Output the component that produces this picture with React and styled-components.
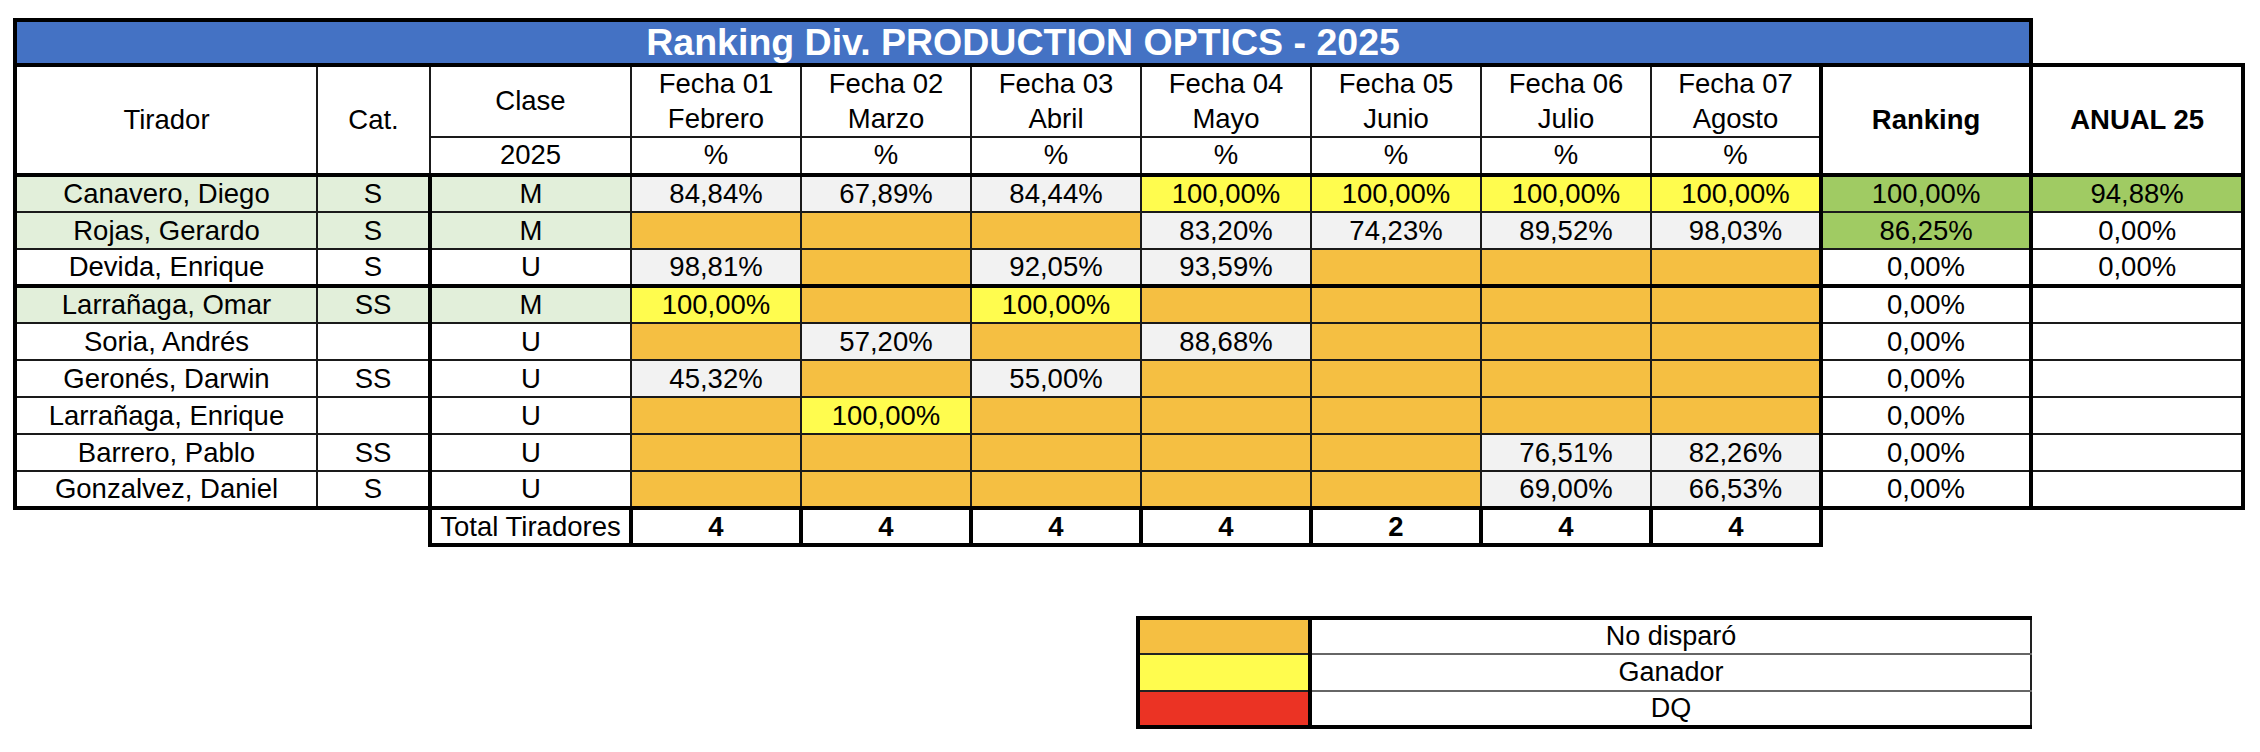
import styled, { createGlobalStyle } from 'styled-components'

const GlobalStyle = createGlobalStyle`
  html, body {
    margin: 0;
    padding: 0;
    background: #fff;
  }
  body {
    font-family: "Liberation Sans", Arial, sans-serif;
    color: #000;
  }
`

const THIN = '2px solid #1a1a1a'
const THICK = '4px solid #000'

const fills = {
  white: '#ffffff',
  mint: '#e2efda',
  gray: '#f2f2f2',
  orange: '#f5bf42',
  yellow: '#fffc4e',
  green: '#a0cb63',
  red: '#eb3324',
  blue: '#4472c4',
}

// layout
const Page = styled.div`
  display: flex;
  flex-direction: column;
  align-items: flex-start;
  gap: 69px;
  padding: 18px 0 0 13px;
`

// tabla principal
const Sheet = styled.table`
  border-collapse: collapse;
  table-layout: fixed;
  width: 2228px;
  font-size: 27.5px;
`

const Row = styled.tr`
  height: ${({ $h }) => $h || 37}px;
`

const Cell = styled.td`
  padding: 0;
  text-align: center;
  vertical-align: middle;
  white-space: nowrap;
  overflow: hidden;
  line-height: 1.15;
  font-weight: ${({ $bold }) => ($bold ? 700 : 400)};
  background: ${({ $bg }) => fills[$bg || 'white']};
  border-left: ${({ $l }) => ($l ? THICK : THIN)};
  border-right: ${({ $r }) => ($r ? THICK : THIN)};
  border-top: ${({ $t }) => ($t ? THICK : THIN)};
  border-bottom: ${({ $b }) => ($b ? THICK : THIN)};
`

const HeadCell = styled(Cell)`
  line-height: 1.26;
`

const Blank = styled.td`
  padding: 0;
  border: none;
  background: transparent;
`

const Title = styled(Cell)`
  color: #fff;
  font-size: 37.5px;
  font-weight: 700;
  line-height: 1;
`

// leyenda
const Legend = styled.table`
  border-collapse: collapse;
  table-layout: fixed;
  width: 893px;
  margin-left: 1123px;
  font-size: 27px;
`

const LegendRow = styled.tr`
  height: 36.5px;
`

const Swatch = styled.td`
  padding: 0;
  background: ${({ $bg }) => fills[$bg]};
  border-left: ${THICK};
  border-right: ${THICK};
  border-top: ${({ $first }) => ($first ? THICK : '2px solid #222')};
  border-bottom: ${({ $last }) => ($last ? THICK : '2px solid #222')};
`

const LegendText = styled.td`
  padding: 0;
  text-align: center;
  vertical-align: middle;
  line-height: 1.1;
  border-right: 2px solid #222;
  border-top: ${({ $first }) => ($first ? THICK : '2px solid #666')};
  border-bottom: ${({ $last }) => ($last ? THICK : '2px solid #666')};
`

const months = ['Febrero', 'Marzo', 'Abril', 'Mayo', 'Junio', 'Julio', 'Agosto']
const totals = [4, 4, 4, 4, 2, 4, 4]

// '' = no disparó, '*' = ganador
const shooters = [
  { name: 'Canavero, Diego', cat: 'S', clase: 'M', mint: true, dates: ['84,84%', '67,89%', '84,44%', '*100,00%', '*100,00%', '*100,00%', '*100,00%'], rank: '100,00%', rankHi: true, anual: '94,88%', anualHi: true },
  { name: 'Rojas, Gerardo', cat: 'S', clase: 'M', mint: true, dates: ['', '', '', '83,20%', '74,23%', '89,52%', '98,03%'], rank: '86,25%', rankHi: true, anual: '0,00%' },
  { name: 'Devida, Enrique', cat: 'S', clase: 'U', dates: ['98,81%', '', '92,05%', '93,59%', '', '', ''], rank: '0,00%', anual: '0,00%', sep: true },
  { name: 'Larrañaga, Omar', cat: 'SS', clase: 'M', mint: true, dates: ['*100,00%', '', '*100,00%', '', '', '', ''], rank: '0,00%', anual: '' },
  { name: 'Soria, Andrés', cat: '', clase: 'U', dates: ['', '57,20%', '', '88,68%', '', '', ''], rank: '0,00%', anual: '' },
  { name: 'Geronés, Darwin', cat: 'SS', clase: 'U', dates: ['45,32%', '', '55,00%', '', '', '', ''], rank: '0,00%', anual: '' },
  { name: 'Larrañaga, Enrique', cat: '', clase: 'U', dates: ['', '*100,00%', '', '', '', '', ''], rank: '0,00%', anual: '' },
  { name: 'Barrero, Pablo', cat: 'SS', clase: 'U', dates: ['', '', '', '', '', '76,51%', '82,26%'], rank: '0,00%', anual: '' },
  { name: 'Gonzalvez, Daniel', cat: 'S', clase: 'U', dates: ['', '', '', '', '', '69,00%', '66,53%'], rank: '0,00%', anual: '', sep: true },
]

const legend = [
  { bg: 'orange', label: 'No disparó' },
  { bg: 'yellow', label: 'Ganador' },
  { bg: 'red', label: 'DQ' },
]

function dateCell(v, i, sep) {
  if (v === '') return <Cell key={i} $bg="orange" $b={sep} />
  if (v.startsWith('*')) return <Cell key={i} $bg="yellow" $b={sep}>{v.slice(1)}</Cell>
  return <Cell key={i} $bg="gray" $b={sep}>{v}</Cell>
}

export default function App() {
  return (
    <>
      <GlobalStyle />
      <Page>
        <Sheet>
          <colgroup>
            <col style={{ width: 302 }} />
            <col style={{ width: 113 }} />
            <col style={{ width: 201 }} />
            {months.map((m) => <col key={m} style={{ width: 170 }} />)}
            <col style={{ width: 210 }} />
            <col style={{ width: 212 }} />
          </colgroup>
          <tbody>
            <Row $h={45}>
              <Title colSpan={11} $bg="blue" $l $r $t $b>Ranking Div. PRODUCTION OPTICS - 2025</Title>
              <Blank />
            </Row>
            <Row $h={71}>
              <HeadCell rowSpan={2} $l $b>Tirador</HeadCell>
              <HeadCell rowSpan={2} $b>Cat.</HeadCell>
              <HeadCell>Clase</HeadCell>
              {months.map((m, i) => (
                <HeadCell key={m}>Fecha 0{i + 1}<br />{m}</HeadCell>
              ))}
              <HeadCell rowSpan={2} $bold $l $b>Ranking</HeadCell>
              <HeadCell rowSpan={2} $bold $l $r $t $b>ANUAL 25</HeadCell>
            </Row>
            <Row $h={37}>
              <HeadCell $b>2025</HeadCell>
              {months.map((m) => <HeadCell key={m} $b>%</HeadCell>)}
            </Row>
            {shooters.map((s) => (
              <Row key={s.name}>
                <Cell $bg={s.mint ? 'mint' : 'white'} $l $b={s.sep}>{s.name}</Cell>
                <Cell $bg={s.mint ? 'mint' : 'white'} $b={s.sep}>{s.cat}</Cell>
                <Cell $bg={s.mint ? 'mint' : 'white'} $l $b={s.sep}>{s.clase}</Cell>
                {s.dates.map((v, i) => dateCell(v, i, s.sep))}
                <Cell $bg={s.rankHi ? 'green' : 'white'} $l $b={s.sep}>{s.rank}</Cell>
                <Cell $bg={s.anualHi ? 'green' : 'white'} $l $r $b={s.sep}>{s.anual}</Cell>
              </Row>
            ))}
            <Row $h={37}>
              <Blank colSpan={2} />
              <Cell $l $r $b>Total Tiradores</Cell>
              {totals.map((t, i) => (
                <Cell key={i} $bold $l $r $b>{t}</Cell>
              ))}
              <Blank colSpan={2} />
            </Row>
          </tbody>
        </Sheet>

        <Legend>
          <colgroup>
            <col style={{ width: 172 }} />
            <col style={{ width: 721 }} />
          </colgroup>
          <tbody>
            {legend.map((l, i) => (
              <LegendRow key={l.label}>
                <Swatch $bg={l.bg} $first={i === 0} $last={i === legend.length - 1} />
                <LegendText $first={i === 0} $last={i === legend.length - 1}>{l.label}</LegendText>
              </LegendRow>
            ))}
          </tbody>
        </Legend>
      </Page>
    </>
  )
}
